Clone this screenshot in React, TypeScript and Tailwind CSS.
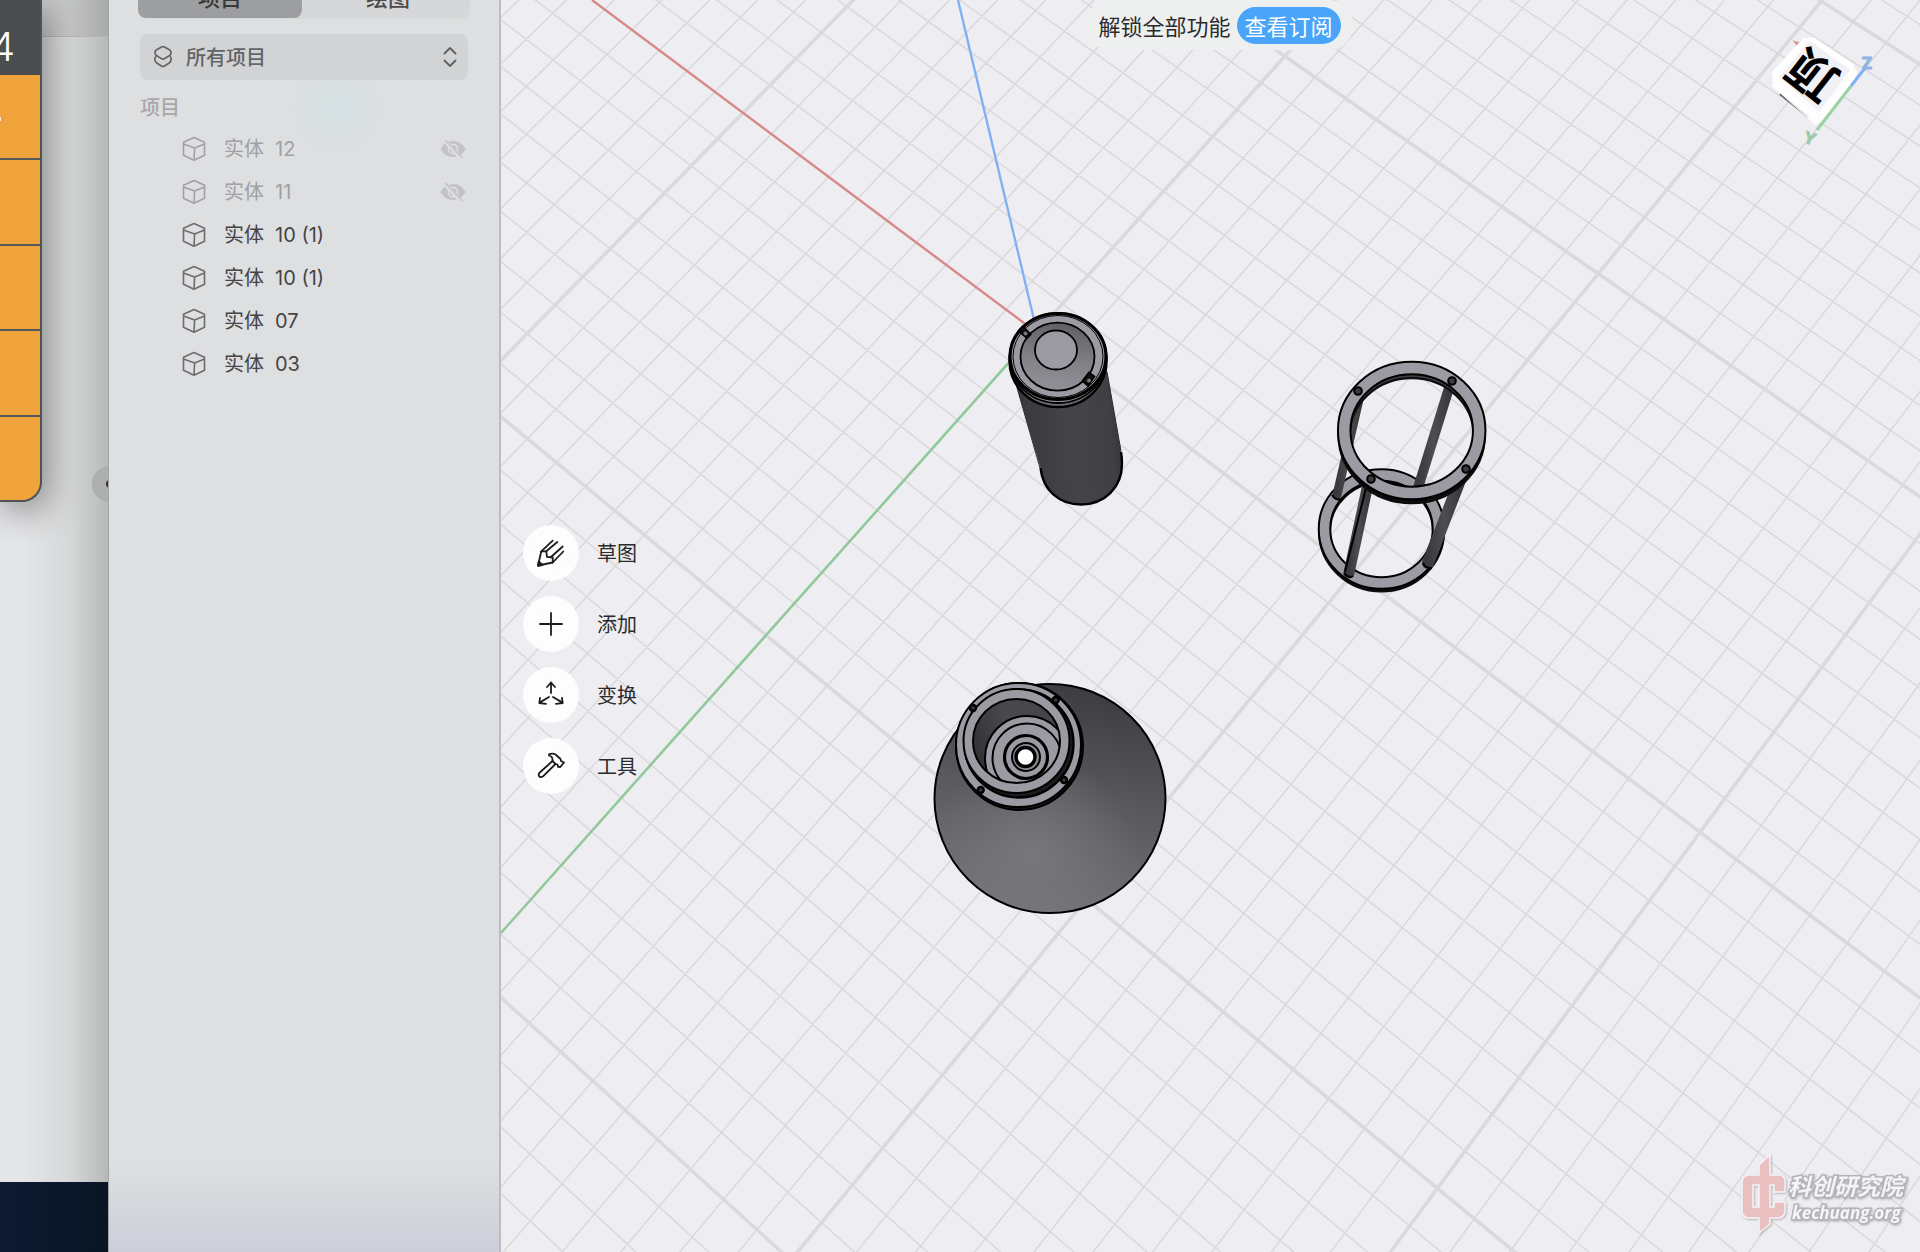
import { useState } from "react";
import type { ReactNode } from "react";

const FONT = "font-['Inter','Noto_Sans_CJK_SC',sans-serif]";
const FONT_CJK = "font-['Noto_Sans_CJK_SC',sans-serif]";

interface Body {
  id: number;
  name: string;
  suffix: string;
  hidden?: boolean;
}

const BODIES: Body[] = [
  { id: 1, name: "实体", suffix: "12", hidden: true },
  { id: 2, name: "实体", suffix: "11", hidden: true },
  { id: 3, name: "实体", suffix: "10 (1)" },
  { id: 4, name: "实体", suffix: "10 (1)" },
  { id: 5, name: "实体", suffix: "07" },
  { id: 6, name: "实体", suffix: "03" },
];

const TABS = ["项目", "绘图"];

// Ground plane (u, v) in major cells -> view coordinates
function project(u: number, v: number) {
  const w = 1 - 0.04074 * u - 0.045 * v;
  return [
    (262.4 * u - 305.9 * v + 1036.7) / w,
    (216 * u + 273.6 * v + 332.4) / w,
  ].map((n) => n.toFixed(1));
}

function gridLines(major: boolean) {
  let d = "";
  for (let i = -60; i <= 60; i++) {
    if ((i % 10 === 0) !== major) continue;
    const k = i / 10;
    // half of each axis is drawn in colour, so the grid leaves it out
    d += `M${project(k, -6).join(" ")}L${project(k, i === 0 ? 0 : 6).join(" ")}`;
    d += `M${project(i === 0 ? 0 : -6, k).join(" ")}L${project(6, k).join(" ")}`;
  }
  return d;
}

const MINOR_GRID = gridLines(false);
const MAJOR_GRID = gridLines(true);

function CubeIcon() {
  return (
    <svg width="24" height="26" viewBox="0 0 24 26" fill="none" stroke="currentColor" strokeWidth="1.6" strokeLinejoin="round">
      <path d="M12 1.5 22.5 6.2V19.3L12 24.2 1.5 19.3V6.2Z" />
      <path d="M1.5 8 12.6 12 22.5 8M12.6 12 12 24" />
    </svg>
  );
}

function LayersIcon() {
  return (
    <svg width="20" height="24" viewBox="0 0 20 24" fill="none" stroke="currentColor" strokeWidth="1.7" strokeLinejoin="round">
      <path d="M8.6 2Q10 1.2 11.4 2L16.4 4.8Q18.2 6 18 7.6 18 9.6 16.6 10.6L11.6 13.6Q10 14.6 8.4 13.6L3.4 10.6Q2 9.6 2 7.6 2 6 3.6 4.8Z" />
      <path d="M3 11.4Q1.2 13 2 15.2 2.2 17 3.8 18L8.4 21Q10 22 11.6 21L16.2 18Q17.8 17 18 15.2 18.8 13 17 11.4" />
    </svg>
  );
}

function ChevronsIcon() {
  return (
    <svg width="16" height="22" viewBox="0 0 16 22" fill="none" stroke="currentColor" strokeWidth="2" strokeLinecap="round" strokeLinejoin="round">
      <path d="M2.5 7.5 8 2l5.500 5.500M2.500 14.500 8 20l5.500-5.500" />
    </svg>
  );
}

function HiddenIcon() {
  return (
    <svg width="28" height="20" viewBox="0 0 28 20" fill="currentColor">
      <path d="M14 2C8.500 2 4 5 1.500 10 4 15 8.500 18 14 18s10-3 12.500-8C24 5 19.500 2 14 2Z" />
      <circle cx="14" cy="10" r="4.600" fill="none" stroke="#dedfe1" strokeWidth="1.600" />
      <path d="M5.500 1.500 22 19" stroke="#dedfe1" strokeWidth="4" />
      <path d="M6.500 1.500 23 18.500" stroke="currentColor" strokeWidth="1.500" strokeLinecap="round" />
    </svg>
  );
}

const TOOLS: { label: string; icon: ReactNode }[] = [
  {
    label: "草图",
    icon: (
      <>
        <path d="M4.300 12.300 15.700 1.700M9.300 12.300 20.300 3M14 18 25.700 7.500M15.700 23.500 26.300 12.500" />
        <path d="M4.300 12.300 1 26.500 15.700 23.500V18.500L10 17.800 9.300 12.300Z" />
        <path d="M1.700 22.500 1 26.800 5.500 26Z" fill="currentColor" />
      </>
    ),
  },
  { label: "添加", icon: <path d="M14 3v22M3 14h22" /> },
  {
    label: "变换",
    icon: (
      <path d="M14 12V1.500M10 6 14 1.500 18 6M12 16 2.500 21.600M3 17 2.300 22 9 22.800M16 16l9.500 5.600M25 17l.700 5-6.700.800" />
    ),
  },
  {
    label: "工具",
    icon: (
      <>
        <path d="M12 2.300Q15.500 1 18.500 2.500L23.500 7 24 9 27 10.500 23.300 15 21 14.800 20.500 12.500 18.500 12 15.500 9Q16 4.500 12 3.500Z" />
        <path d="M15.500 9 2.300 21Q1 23.300 2.500 24.500 4 25.800 6 24.300L18.500 12" />
      </>
    ),
  },
];

function Battery() {
  return (
    <g stroke="#000" strokeWidth="1.800">
      <path d="M1014 378 1040.500 468C1043 491 1060 505 1081 505 1105 505 1122.500 487 1122.500 464Q1122.500 457 1121 452L1106 366Z" fill="url(#barrel)" stroke="none" />
      <path d="M1016 384 1040 468M1107 372 1121 451" fill="none" stroke="#2b2b2e" strokeWidth="1" />
      <path d="M1040.500 468C1043 491 1060 504.500 1081 504.500 1105 504.500 1122 487 1122 464Q1122 457 1121 452" fill="none" strokeWidth="2.400" />
      <ellipse cx="1058" cy="361" rx="48.500" ry="46" fill="#6d6c72" strokeWidth="2.400" />
      <ellipse cx="1058" cy="358" rx="48.500" ry="45" fill="#8d8c93" />
      <ellipse cx="1058" cy="356.500" rx="48" ry="43" fill="#9c9ba4" strokeWidth="3.200" />
      <ellipse cx="1058" cy="356.500" rx="45" ry="41" fill="#9c9ba4" strokeWidth="1" />
      <ellipse cx="1057.500" cy="356.700" rx="37" ry="34" fill="url(#dome)" />
      <ellipse cx="1056" cy="350" rx="21" ry="19.500" fill="#9c9ba4" />
      <path d="M1018.500 331 1027 338 1030.500 334.500 1023 326Z" fill="#111" />
      <circle cx="1025.500" cy="333.500" r="2" fill="#77767b" stroke="none" />
      <path d="M1082.500 381 1088 386 1094.500 376.500 1089 372.500Z" fill="#111" />
      <circle cx="1089" cy="380.500" r="2" fill="#77767b" stroke="none" />
    </g>
  );
}

function Frame() {
  const rods = [
    { from: [1360, 395], to: [1337, 495], w: 9 },
    { from: [1449, 388], to: [1418, 488], w: 10 },
    { from: [1368, 484], to: [1349, 573], w: 11 },
    { from: [1460, 480], to: [1428, 563], w: 12 },
  ];
  const holes = [[1358, 391], [1452, 381], [1466, 469], [1371, 479]];
  return (
    <g>
      <g fill="none" stroke="#000">
        <ellipse cx="1381.500" cy="531.500" rx="57" ry="54.500" stroke="#0c0c0d" strokeWidth="13" />
        <ellipse cx="1381.500" cy="529" rx="57" ry="54" strokeWidth="13.500" />
        <ellipse cx="1381.500" cy="529" rx="57" ry="54" stroke="#9c9ba4" strokeWidth="9.500" />
      </g>
      {rods.map(({ from, to, w }) => (
        <line key={from[0]} x1={from[0]} y1={from[1]} x2={to[0]} y2={to[1]} stroke="url(#rod)" strokeWidth={w} strokeLinecap="round" />
      ))}
      <path d="M1367 484 1345 572" stroke="#000" strokeWidth="2" />
      <path d="M1332 495q4 6 9 4M1423 563q3 6 9 5M1344 573q5 6 9 3" stroke="#000" strokeWidth="2" fill="none" />
      <g fill="none" stroke="#000">
        <ellipse cx="1411.700" cy="435" rx="67.500" ry="62.500" stroke="#0c0c0d" strokeWidth="13.500" />
        <ellipse cx="1411.700" cy="434" rx="63" ry="58" stroke="#3d3c40" strokeWidth="2" />
        <ellipse cx="1411.700" cy="430.500" rx="67.500" ry="62.500" strokeWidth="14.500" />
        <ellipse cx="1411.700" cy="430.500" rx="67.500" ry="62.500" stroke="#9c9ba4" strokeWidth="10.500" />
      </g>
      {holes.map(([cx, cy]) => (
        <circle key={cx} cx={cx} cy={cy} r="3.800" fill="#3a393d" stroke="#000" strokeWidth="2" />
      ))}
    </g>
  );
}

function Nozzle() {
  const holes = [[1055.7, 700], [973, 708], [980.7, 790], [1064, 780]];
  return (
    <g stroke="#000" strokeWidth="2">
      <ellipse cx="1050" cy="798.500" rx="115.500" ry="114.500" fill="url(#cone)" />
      <ellipse cx="1050" cy="798.500" rx="114.500" ry="113.500" fill="url(#coneLight)" stroke="none" />
      <circle cx="1019.500" cy="746.500" r="63.500" fill="#111" strokeWidth="2" />
      <ellipse cx="1018.500" cy="745" rx="62.500" ry="62" fill="#9c9ba4" />
      <ellipse cx="1019" cy="743.500" rx="54.500" ry="54" fill="#1c1c1e" strokeWidth="2.400" />
      <ellipse cx="1016.500" cy="741" rx="53" ry="52" fill="#9c9ba4" />
      <clipPath id="bore">
        <ellipse cx="1016.500" cy="741" rx="43.500" ry="42" />
      </clipPath>
      <g clipPath="url(#bore)">
        <rect x="970" y="695" width="95" height="92" fill="url(#boreFill)" stroke="none" />
        <circle cx="1027" cy="758" r="42" fill="#9c9ba4" />
        <circle cx="1027" cy="758" r="34.500" fill="#9c9ba4" />
      </g>
      <ellipse cx="1016.500" cy="741" rx="43.500" ry="42" fill="none" />
      <circle cx="1026" cy="757" r="21.500" fill="#9c9ba4" strokeWidth="3.200" />
      <circle cx="1026" cy="757" r="14" fill="#8a8991" />
      <circle cx="1025.500" cy="757" r="9.500" fill="#fff" strokeWidth="3.400" />
      {holes.map(([cx, cy]) => (
        <circle key={cx} cx={cx} cy={cy} r="3" fill="#3a393d" strokeWidth="2.400" />
      ))}
    </g>
  );
}

function Scene() {
  return (
    <svg className="absolute inset-0 h-full w-full" viewBox="501 0 1419 1252" preserveAspectRatio="xMinYMin slice" aria-hidden="true">
      <defs>
        <linearGradient id="barrel" x1="0" x2="1" y1="0.100" y2="0">
          <stop offset="0" stopColor="#39383b" />
          <stop offset="0.500" stopColor="#454448" />
          <stop offset="0.850" stopColor="#404044" />
          <stop offset="1" stopColor="#2f2f32" />
        </linearGradient>
        <linearGradient id="dome" x1="0.600" x2="0.450" y1="0" y2="1">
          <stop offset="0" stopColor="#605f64" />
          <stop offset="0.600" stopColor="#84838a" />
          <stop offset="1" stopColor="#929198" />
        </linearGradient>
        <linearGradient id="rod" x1="0" x2="1" y1="0" y2="0">
          <stop offset="0" stopColor="#3a393c" />
          <stop offset="0.500" stopColor="#4d4c50" />
          <stop offset="1" stopColor="#3a393c" />
        </linearGradient>
        <linearGradient id="cone" x1="0.650" x2="0.450" y1="0" y2="1">
          <stop offset="0" stopColor="#3c3b3f" />
          <stop offset="0.450" stopColor="#57565a" />
          <stop offset="1" stopColor="#757479" />
        </linearGradient>
        <radialGradient id="coneLight" cx="0.420" cy="0.750" r="0.450">
          <stop offset="0" stopColor="#77767b" />
          <stop offset="1" stopColor="#77767b" stopOpacity="0" />
        </radialGradient>
        <linearGradient id="boreFill" x1="0" x2="1" y1="0.700" y2="0.200">
          <stop offset="0" stopColor="#2f2f32" />
          <stop offset="0.500" stopColor="#49484c" />
          <stop offset="1" stopColor="#454448" />
        </linearGradient>
      </defs>
      <path d={MINOR_GRID} stroke="#d9d9dc" strokeWidth="1.500" />
      <path d={MAJOR_GRID} stroke="#dadadd" strokeWidth="3.600" />
      <path d="M592 0 1036 332" stroke="#d58a87" strokeWidth="2.400" />
      <path d="M1036 332 501 933" stroke="#92c89b" strokeWidth="2.600" />
      <path d="M958 0 1036 328" stroke="#82b1f3" strokeWidth="2.400" />
      <Battery />
      <Frame />
      <Nozzle />
    </svg>
  );
}

function ViewCube() {
  return (
    <svg className="absolute top-0 right-0" width="200" height="170" viewBox="0 0 200 170" role="img" aria-label="视图方向">
      <path d="M75 42l4 1 1 3-2 0Z" fill="#dd9a9a" stroke="#dd9a9a" strokeWidth="2" />
      <path d="M60 94 88 117" stroke="#555" strokeWidth="2" />
      <path d="M52 77 87 38 92 37 134 67 137 72 131 86 101 122 95 125 53 87Z" fill="#fff" fillOpacity="0.850" />
      <path d="M59 77 90 41 130 70 99 112Z" fill="#f1f1f5" />
      <path d="M53 75 86 39M92 39 133 67M135 76 102 114M53 84 96 117" stroke="#fff" strokeWidth="5" />
      <path d="M131 86 97 130" stroke="#9ad3a1" strokeWidth="3" />
      <path d="M131 86 145 68" stroke="#7fb1f5" strokeWidth="3" />
      <text x="91" y="78" transform="rotate(218 91 78)" textAnchor="middle" dominantBaseline="central" className="fill-black font-['Noto_Sans_CJK_SC',sans-serif] text-[48px] font-bold">顶</text>
      <text x="147" y="69" textAnchor="middle" className="fill-[#8db2e6] stroke-[#8db2e6] font-['Inter',sans-serif] text-[16px] font-bold">Z</text>
      <text x="90" y="138" transform="rotate(18 90 138)" textAnchor="middle" dominantBaseline="central" className="fill-[#9dcba6] stroke-[#9dcba6] font-['Inter',sans-serif] text-[16px] font-bold">Y</text>
    </svg>
  );
}

function Watermark() {
  return (
    <svg className="absolute right-0 bottom-0" width="200" height="112" viewBox="0 0 200 112" role="img" aria-label="科创研究院 kechuang.org">
      <defs>
        <filter id="soft" x="-10%" y="-10%" width="120%" height="120%">
          <feDropShadow dx="1" dy="1" stdDeviation="1" floodColor="#999" floodOpacity="0.700" />
        </filter>
      </defs>
      <g filter="url(#soft)">
        <path
          d="M50 15V35H61Q65 37 65 41V52H54V45H50V67H54V62H65V72Q64 77 59 78H50V84L39 93V78H28Q23 77 22 72V41Q23 36 28 35H39V25ZM39 45H33V67H39Z"
          fill="#eabfbf"
          stroke="#f5f3f5"
          strokeWidth="1.500"
          fillRule="evenodd"
        />
        <text x="68" y="55" className="fill-[#f4f4f6] stroke-[#b4b4b8] stroke-3 font-['Noto_Sans_CJK_SC',sans-serif] text-[23px] font-bold italic [paint-order:stroke]">科创研究院</text>
        <text x="72" y="79" className="fill-[#f6f6f8] stroke-[#b4b4b8] stroke-3 font-['Open_Sans',sans-serif] text-[17px] font-bold italic [paint-order:stroke]">kechuang.org</text>
      </g>
    </svg>
  );
}

// Strip of the desktop with the calculator that shows left of the app window
function DesktopEdge() {
  return (
    <div className="flex w-[108px] shrink-0 flex-col overflow-hidden">
      <div className="relative flex flex-1 bg-linear-to-r from-[#e5e6e8] from-20% via-[#d6d7d8] via-65% to-[#b7b9b9]">
        <div className="absolute inset-x-0 top-0 h-[37px] border-b border-[#b4b6b6] bg-black/8" />
        <div className="relative flex h-[502px] w-[42px] flex-col self-start overflow-hidden rounded-br-[20px] border-r-2 border-b-2 border-[#4f5356] bg-[#f0a23b] shadow-[4px_8px_36px_rgba(0,0,0,0.45)]">
          <div className="h-[75px] overflow-hidden bg-[#4b4c4f]">
            <output className="-ml-[10px] block pt-[23px] text-[40px] leading-[48px] font-light text-white">4</output>
          </div>
          <div className="flex h-[83px] items-center pt-1">
            <span className="h-1 w-px bg-white/80" />
          </div>
          {[1, 2, 3, 4].map((n) => (
            <div key={n} className="flex-1 border-t-2 border-[#55585a]" />
          ))}
        </div>
        <div className="absolute top-[466px] left-[92px] flex size-9 items-center rounded-full bg-[#adafaf] pl-[14px]">
          <span className="size-2 rounded-full bg-[#333]" />
        </div>
      </div>
      <div className="h-[70px] bg-linear-to-r from-[#0c1a33] to-[#0a1524]" />
    </div>
  );
}

export default function App() {
  const [tab, setTab] = useState(TABS[0]);
  const [tool, setTool] = useState("");

  return (
    <div className={`flex min-h-screen overflow-hidden bg-[#eeeef2] ${FONT}`}>
      <DesktopEdge />

      <aside className="relative flex w-[393px] shrink-0 flex-col border-r-2 border-l border-r-[#bcbdc0] border-l-[#a3a5a6] bg-[#dedfe1] bg-[radial-gradient(circle_at_228px_108px,rgba(205,225,228,0.6),transparent_52px)] px-[30px]">
        <div className="absolute inset-x-0 bottom-0 h-[90px] bg-linear-to-b from-transparent to-[#cbcfd9]" />

        <div className="-mt-[19px] -ml-px flex h-[38px] w-[332px] shrink-0 gap-1 rounded-[9px] bg-[#d6d7d8]" role="tablist">
          {TABS.map((name) => (
            <button
              key={name}
              role="tab"
              aria-selected={tab === name}
              onClick={() => setTab(name)}
              className={`mb-px flex-1 rounded-[8px] pb-[2px] text-[22px] leading-[33px] font-medium ${tab === name ? "bg-[#9d9e9f] text-[#383838]" : "text-[#4a4a4b]"}`}
            >
              {name}
            </button>
          ))}
        </div>

        <div className="relative mt-[15px] ml-px flex h-[46px] w-[328px] items-center rounded-[8px] bg-black/5 text-[#636465]">
          <span className="absolute left-[13px]"><LayersIcon /></span>
          <select aria-label="所有项目" className={`h-full w-full appearance-none bg-transparent pl-[46px] text-[20px] font-medium outline-none ${FONT_CJK}`}>
            <option>所有项目</option>
          </select>
          <span className="pointer-events-none absolute right-[10px]"><ChevronsIcon /></span>
        </div>

        <h2 className={`mt-3 ml-px text-[20px] leading-[30px] font-medium text-[#a7a8aa] ${FONT_CJK}`}>项目</h2>

        <ul className="mt-[5px]">
          {BODIES.map((body) => (
            <li key={body.id} className={`flex h-[43px] items-center pr-[2px] pl-[43px] ${body.hidden ? "text-[#a0a1a3]" : "text-[#454546]"}`}>
              <span className={body.hidden ? "" : "text-[#6c6d6e]"}><CubeIcon /></span>
              <span className={`ml-[18px] text-[20px] leading-[30px] ${FONT_CJK}`}>
                {body.name}
                <span className={`ml-[11px] ${FONT}`}>{body.suffix}</span>
              </span>
              {body.hidden && (
                <button aria-label="显示" className="ml-auto text-[#c2c3c5]"><HiddenIcon /></button>
              )}
            </li>
          ))}
        </ul>
      </aside>

      <main className="relative min-w-0 flex-1 overflow-hidden">
        <Scene />

        <div className="relative flex justify-center pl-[18px]">
          <div className={`flex h-[50px] items-center gap-1.5 rounded-[24px] bg-[#eef0f0] px-3 text-[22px] text-[#2b2b2b] ${FONT_CJK}`}>
            <span>解锁全部功能</span>
            <button className="h-[37px] rounded-full bg-[#4aa4f9] px-2 leading-[36px] text-white">查看订阅</button>
          </div>
        </div>

        <div className="relative mt-[475px] ml-[22px] flex w-fit flex-col gap-[15px]">
          {TOOLS.map(({ label, icon }) => (
            <button
              key={label}
              onClick={() => setTool(label)}
              aria-pressed={tool === label}
              className={`flex items-center gap-[18px] text-[20px] text-[#2b2b2b] ${FONT_CJK}`}
            >
              <span className="flex size-14 items-center justify-center rounded-full bg-white/90 text-[#1c1c1c]">
                <svg width="28" height="28" viewBox="0 0 28 28" fill="none" stroke="currentColor" strokeWidth="1.800" strokeLinecap="round" strokeLinejoin="round">
                  {icon}
                </svg>
              </span>
              {label}
            </button>
          ))}
        </div>

        <ViewCube />
        <Watermark />
      </main>
    </div>
  );
}
